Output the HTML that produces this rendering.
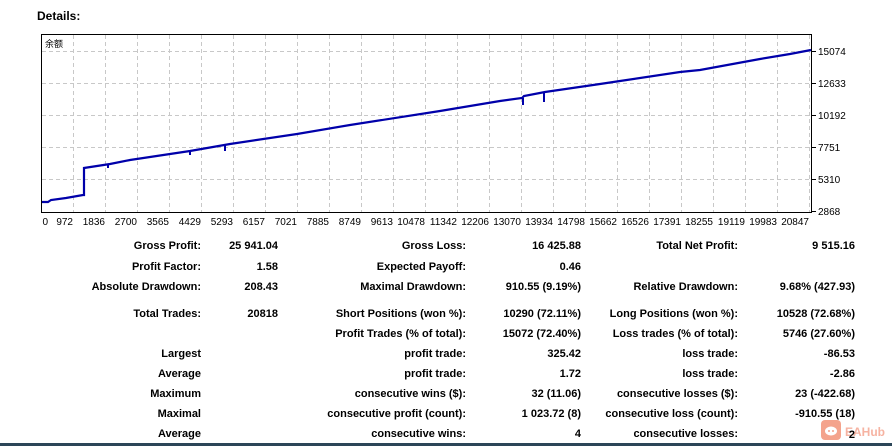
<!DOCTYPE html>
<html><head><meta charset="utf-8"><style>
body{margin:0;width:892px;height:446px;background:#fff;position:relative;overflow:hidden;font-family:"Liberation Sans","Noto Sans CJK SC",sans-serif;font-weight:bold;font-size:11px;color:#000}
.t{position:absolute;white-space:nowrap;text-align:right;line-height:13px}
svg{position:absolute;left:0;top:0}
</style></head><body>
<div class="t" style="left:37px;top:10px;text-align:left;font-size:12px">Details:</div>
<svg width="892" height="230" font-family="Liberation Sans, sans-serif" font-size="10" font-weight="normal">
<g stroke="#c8c8c8" stroke-dasharray="4,3" stroke-width="1">
<line x1="42" x2="811" y1="51.5" y2="51.5"/><line x1="42" x2="811" y1="83.5" y2="83.5"/><line x1="42" x2="811" y1="115.5" y2="115.5"/><line x1="42" x2="811" y1="147.5" y2="147.5"/><line x1="42" x2="811" y1="179.5" y2="179.5"/>
<line x1="73.5" x2="73.5" y1="35" y2="212"/><line x1="105.5" x2="105.5" y1="35" y2="212"/><line x1="137.5" x2="137.5" y1="35" y2="212"/><line x1="169.5" x2="169.5" y1="35" y2="212"/><line x1="201.5" x2="201.5" y1="35" y2="212"/><line x1="233.5" x2="233.5" y1="35" y2="212"/><line x1="265.5" x2="265.5" y1="35" y2="212"/><line x1="297.5" x2="297.5" y1="35" y2="212"/><line x1="329.5" x2="329.5" y1="35" y2="212"/><line x1="361.5" x2="361.5" y1="35" y2="212"/><line x1="393.5" x2="393.5" y1="35" y2="212"/><line x1="425.5" x2="425.5" y1="35" y2="212"/><line x1="457.5" x2="457.5" y1="35" y2="212"/><line x1="489.5" x2="489.5" y1="35" y2="212"/><line x1="521.5" x2="521.5" y1="35" y2="212"/><line x1="553.5" x2="553.5" y1="35" y2="212"/><line x1="585.5" x2="585.5" y1="35" y2="212"/><line x1="617.5" x2="617.5" y1="35" y2="212"/><line x1="649.5" x2="649.5" y1="35" y2="212"/><line x1="681.5" x2="681.5" y1="35" y2="212"/><line x1="713.5" x2="713.5" y1="35" y2="212"/><line x1="745.5" x2="745.5" y1="35" y2="212"/><line x1="777.5" x2="777.5" y1="35" y2="212"/><line x1="809.5" x2="809.5" y1="35" y2="212"/>
</g>
<rect x="41.5" y="34.5" width="770" height="178" fill="none" stroke="#000" stroke-width="1"/>
<g stroke="#000"><line x1="812" x2="816" y1="51.5" y2="51.5"/><line x1="812" x2="816" y1="83.5" y2="83.5"/><line x1="812" x2="816" y1="115.5" y2="115.5"/><line x1="812" x2="816" y1="147.5" y2="147.5"/><line x1="812" x2="816" y1="179.5" y2="179.5"/><line x1="812" x2="816" y1="211.5" y2="211.5"/></g>
<polyline fill="none" stroke="#0000aa" stroke-width="2.2" points="42,202 48,202 51,200 66,198 83,195 84,195 84,168 110,164 130,160 170,154 190,151 230,144 297,134 350,125 440,111 500,101 522,98 524,96 545,92 600,84 620,81 680,72 700,70 760,59 790,54 811,50"/>
<g stroke="#0000aa" stroke-width="2"><line x1="108" x2="108" y1="164" y2="168"/><line x1="190" x2="190" y1="151" y2="155"/><line x1="225" x2="225" y1="145" y2="151"/><line x1="523" x2="523" y1="98" y2="105"/><line x1="544" x2="544" y1="92" y2="102"/></g>
<text x="45" y="47" font-family="Noto Sans CJK SC, sans-serif" font-size="9">余额</text>
<g text-anchor="start"><text x="818" y="55">15074</text><text x="818" y="87">12633</text><text x="818" y="119">10192</text><text x="818" y="151">7751</text><text x="818" y="183">5310</text><text x="818" y="215">2868</text></g>
<g text-anchor="end" font-size="10"><text x="48" y="225">0</text><text x="73" y="225">972</text><text x="105" y="225">1836</text><text x="137" y="225">2700</text><text x="169" y="225">3565</text><text x="201" y="225">4429</text><text x="233" y="225">5293</text><text x="265" y="225">6157</text><text x="297" y="225">7021</text><text x="329" y="225">7885</text><text x="361" y="225">8749</text><text x="393" y="225">9613</text><text x="425" y="225">10478</text><text x="457" y="225">11342</text><text x="489" y="225">12206</text><text x="521" y="225">13070</text><text x="553" y="225">13934</text><text x="585" y="225">14798</text><text x="617" y="225">15662</text><text x="649" y="225">16526</text><text x="681" y="225">17391</text><text x="713" y="225">18255</text><text x="745" y="225">19119</text><text x="777" y="225">19983</text><text x="809" y="225">20847</text></g>
</svg>

<div class="t" style="right:691px;top:240px">Gross Profit:</div><div class="t" style="right:614px;top:240px">25 941.04</div>
<div class="t" style="right:426px;top:240px">Gross Loss:</div><div class="t" style="right:311px;top:240px">16 425.88</div>
<div class="t" style="right:154px;top:240px">Total Net Profit:</div><div class="t" style="right:37px;top:240px">9 515.16</div>

<div class="t" style="right:691px;top:261px">Profit Factor:</div><div class="t" style="right:614px;top:261px">1.58</div>
<div class="t" style="right:426px;top:261px">Expected Payoff:</div><div class="t" style="right:311px;top:261px">0.46</div>

<div class="t" style="right:691px;top:281px">Absolute Drawdown:</div><div class="t" style="right:614px;top:281px">208.43</div>
<div class="t" style="right:426px;top:281px">Maximal Drawdown:</div><div class="t" style="right:311px;top:281px">910.55 (9.19%)</div>
<div class="t" style="right:154px;top:281px">Relative Drawdown:</div><div class="t" style="right:37px;top:281px">9.68% (427.93)</div>

<div class="t" style="right:691px;top:308px">Total Trades:</div><div class="t" style="right:614px;top:308px">20818</div>
<div class="t" style="right:426px;top:308px">Short Positions (won %):</div><div class="t" style="right:311px;top:308px">10290 (72.11%)</div>
<div class="t" style="right:154px;top:308px">Long Positions (won %):</div><div class="t" style="right:37px;top:308px">10528 (72.68%)</div>

<div class="t" style="right:426px;top:328px">Profit Trades (% of total):</div><div class="t" style="right:311px;top:328px">15072 (72.40%)</div>
<div class="t" style="right:154px;top:328px">Loss trades (% of total):</div><div class="t" style="right:37px;top:328px">5746 (27.60%)</div>

<div class="t" style="right:691px;top:348px">Largest</div>
<div class="t" style="right:426px;top:348px">profit trade:</div><div class="t" style="right:311px;top:348px">325.42</div>
<div class="t" style="right:154px;top:348px">loss trade:</div><div class="t" style="right:37px;top:348px">-86.53</div>

<div class="t" style="right:691px;top:368px">Average</div>
<div class="t" style="right:426px;top:368px">profit trade:</div><div class="t" style="right:311px;top:368px">1.72</div>
<div class="t" style="right:154px;top:368px">loss trade:</div><div class="t" style="right:37px;top:368px">-2.86</div>

<div class="t" style="right:691px;top:388px">Maximum</div>
<div class="t" style="right:426px;top:388px">consecutive wins ($):</div><div class="t" style="right:311px;top:388px">32 (11.06)</div>
<div class="t" style="right:154px;top:388px">consecutive losses ($):</div><div class="t" style="right:37px;top:388px">23 (-422.68)</div>

<div class="t" style="right:691px;top:408px">Maximal</div>
<div class="t" style="right:426px;top:408px">consecutive profit (count):</div><div class="t" style="right:311px;top:408px">1 023.72 (8)</div>
<div class="t" style="right:154px;top:408px">consecutive loss (count):</div><div class="t" style="right:37px;top:408px">-910.55 (18)</div>

<div class="t" style="right:691px;top:428px">Average</div>
<div class="t" style="right:426px;top:428px">consecutive wins:</div><div class="t" style="right:311px;top:428px">4</div>
<div class="t" style="right:154px;top:428px">consecutive losses:</div>

<svg width="892" height="446" style="pointer-events:none">
<rect x="821" y="420" width="20" height="20" rx="4" fill="#f4a38c"/>
<ellipse cx="831" cy="431" rx="6" ry="4.5" fill="#fff"/>
<circle cx="829" cy="431" r="1" fill="#f4a38c"/><circle cx="833" cy="431" r="1" fill="#f4a38c"/>
<text x="845" y="436" font-family="Liberation Sans, sans-serif" font-size="12" fill="#f6b3a2">EAHub</text>
</svg>
<div class="t" style="right:37px;top:429px">2</div>
<div style="position:absolute;left:0;top:443px;width:892px;height:3px;background:#2c4658"></div>
</body></html>
